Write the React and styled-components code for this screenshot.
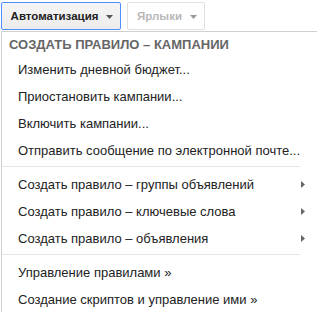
import styled, { createGlobalStyle } from "styled-components";

const GlobalStyle = createGlobalStyle`
  body {
    margin: 0;
    background: #ffffff;
    font-family: "Liberation Sans", Arial, sans-serif;
  }
`;

const sections = [
  {
    items: [
      { label: "Изменить дневной бюджет..." },
      { label: "Приостановить кампании..." },
      { label: "Включить кампании..." },
      { label: "Отправить сообщение по электронной почте..." },
    ],
  },
  {
    items: [
      { label: "Создать правило – группы объявлений", sub: true },
      { label: "Создать правило – ключевые слова", sub: true },
      { label: "Создать правило – объявления", sub: true },
    ],
  },
  {
    items: [
      { label: "Управление правилами »" },
      { label: "Создание скриптов и управление ими »" },
    ],
  },
];

function Caret({ color }) {
  return (
    <svg width="7" height="4" viewBox="0 0 7 4">
      <path d="M0 0 L7 0 L3.5 4 Z" fill={color} />
    </svg>
  );
}

function SubArrow() {
  return (
    <svg width="4" height="7" viewBox="0 0 4 7">
      <path d="M0 0 L4 3.5 L0 7 Z" fill="#666" />
    </svg>
  );
}

export default function App() {
  return (
    <Page>
      <GlobalStyle />
      <Toolbar>
        <DropButton active width={120}>
          Автоматизация
          <Caret color="#555" />
        </DropButton>
        <DropButton disabled width={78}>
          Ярлыки
          <Caret color="#999" />
        </DropButton>
      </Toolbar>
      <Menu>
        <Header>СОЗДАТЬ ПРАВИЛО – КАМПАНИИ</Header>
        {sections.map((section, i) => (
          <div key={i}>
            {i > 0 && <Separator />}
            {section.items.map((item) => (
              <Item key={item.label}>
                <span>{item.label}</span>
                {item.sub && <SubArrow />}
              </Item>
            ))}
          </div>
        ))}
      </Menu>
    </Page>
  );
}

const Page = styled.div`
  width: 317px;
  height: 312px;
  overflow: hidden;
  padding-left: 1px;
  box-sizing: border-box;
`;

const Toolbar = styled.div`
  display: flex;
  gap: 6px;
  padding-top: 2px;
  height: 29px;
  box-sizing: border-box;
`;

const DropButton = styled.button`
  width: ${({ width }) => width}px;
  height: 28px;
  display: flex;
  align-items: center;
  justify-content: center;
  gap: 8px;
  padding: 0 0 0 2px;
  font-family: "Liberation Sans", Arial, sans-serif;
  font-size: 11.5px;
  font-weight: 700;
  border-radius: 2px;
  color: ${({ disabled }) => (disabled ? "#b8b8b8" : "#222")};
  border: 1px solid ${({ active }) => (active ? "#4d90fe" : "#e0e0e0")};
  background: ${({ active }) =>
    active ? "linear-gradient(#f5f5f5, #ececec)" : "#ffffff"};
  cursor: default;
  svg {
    margin-top: 1px;
  }
`;

const Menu = styled.div`
  margin-top: 2px;
  border: 1px solid #d0d0d0;
  border-right: none;
  border-bottom: none;
  background: #fff;
  height: 300px;
`;

const Header = styled.div`
  height: 24px;
  line-height: 26px;
  padding-left: 7px;
  font-size: 13px;
  font-weight: 700;
  color: #666;
`;

const Item = styled.div`
  height: 27px;
  display: flex;
  align-items: center;
  justify-content: space-between;
  padding: 0 12px 0 16px;
  font-size: 13px;
  color: #222;
  white-space: nowrap;
`;

const Separator = styled.div`
  height: 1px;
  width: 298px;
  background: #e5e5e5;
  margin: 2px 0 4px 0;
`;
